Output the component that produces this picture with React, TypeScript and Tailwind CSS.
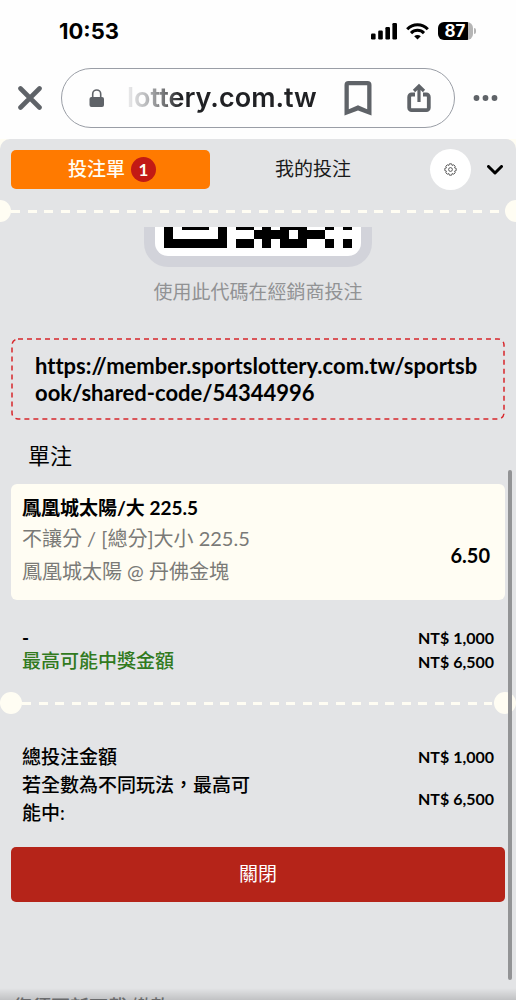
import type { ReactNode } from 'react';

const SLIP = {
  count: 1,
  url: 'https://member.sportslottery.com.tw/sportsbook/shared-code/54344996',
  stake: 'NT$ 1,000',
  payout: 'NT$ 6,500',
};

// bottom rows of the code: [x, y, width, height]
const QR_BLOCKS = [
  [0, 0, 9, 21], [54, 0, 9, 21], [0, 12, 63, 9], [18, 0, 27, 3],
  [72, 0, 18, 3], [72, 12, 18, 9], [90, 3, 36, 9], [99, 0, 9, 21],
  [117, 0, 27, 3], [117, 12, 27, 9], [135, 3, 27, 9],
  [162, 0, 9, 3], [162, 12, 9, 9], [180, 0, 9, 3], [180, 12, 9, 9],
];

function StatusBar() {
  return (
    <div className="flex h-[62px] items-center justify-between pl-[59px] pr-10 font-[Inter,sans-serif]">
      <span className="text-[22px] leading-7 font-bold text-black">10:53</span>
      <div className="flex items-center gap-[9px]">
        <svg width="26" height="17" viewBox="0 0 26 17" aria-hidden="true">
          <rect x="0" y="10.5" width="4.6" height="6" rx="1.2" />
          <rect x="7.2" y="7.5" width="4.6" height="9" rx="1.2" />
          <rect x="14.4" y="4" width="4.6" height="12.5" rx="1.2" />
          <rect x="21.4" y="0" width="4.6" height="16.5" rx="1.2" />
        </svg>
        <svg width="23" height="17" viewBox="0 0 23 17" fill="none" stroke="black" strokeWidth="3" aria-hidden="true">
          <path d="M1.2 6.2C7 .2 16 .2 21.8 6.2" />
          <path d="M5 10.1C8.6 6.4 14.4 6.4 18 10.1" />
          <path d="M11.5 16.5 8.2 13.2C10 11.5 13 11.5 14.8 13.2Z" fill="black" stroke="none" />
        </svg>
        <div className="flex items-center gap-px">
          <div className="flex h-[18px] w-[35px] items-center justify-center rounded-[6px] bg-[linear-gradient(90deg,#000_0_30px,#b5b5b5_30px)] pr-px text-[17px] leading-none font-bold text-white">
            87
          </div>
          <div className="h-[6px] w-[2px] rounded-r-full bg-[#b5b5b5]" />
        </div>
      </div>
    </div>
  );
}

function AddressBar() {
  return (
    <div className="flex h-[77px] items-start gap-[18px] px-[18px] pt-[6px] text-[#5f6368]">
      <button type="button" aria-label="關閉分頁" className="flex h-[60px] w-[25px] shrink-0 items-center">
        <svg width="24" height="24" viewBox="0 0 24 24" fill="none" stroke="currentColor" strokeWidth="4.6" strokeLinecap="round">
          <path d="M2.5 2.5 21.5 21.5M21.5 2.5 2.5 21.5" />
        </svg>
      </button>
      <div className="flex h-[60px] min-w-0 flex-1 items-center rounded-full border border-[#9a9ea6] pl-[27px] pr-[23px]">
        <svg width="16" height="19" viewBox="0 0 16 19" className="shrink-0" aria-hidden="true">
          <rect x="0.5" y="8" width="14.5" height="10" rx="2" fill="currentColor" />
          <path d="M3.7 9V5a4 4 0 0 1 8 0V9" fill="none" stroke="currentColor" strokeWidth="1.6" />
        </svg>
        <span className="ml-[22px] flex-1 overflow-hidden bg-[linear-gradient(90deg,#ededee_0,#b8b9bb_20px,#77787a_36px,#202124_54px)] bg-clip-text font-[Inter,sans-serif] text-[27px] leading-9 font-semibold whitespace-nowrap text-transparent">
          lottery.com.tw
        </span>
        <button type="button" aria-label="加入書籤" className="shrink-0">
          <svg width="28" height="35" viewBox="0 0 28 35" fill="currentColor" fillRule="evenodd">
            <path d="M.5 4A4 4 0 0 1 4.5 0h19A4 4 0 0 1 27.5 4v30.5L14 29.5.5 34.5zM4.8 4.3v24L14 24.2l9.2 4.1v-24z" />
          </svg>
        </button>
        <button type="button" aria-label="分享" className="ml-[35px] shrink-0">
          <svg width="24" height="30" viewBox="0 0 24 30" fill="none" stroke="currentColor" strokeWidth="3.8">
            <path d="M8 11.5H4.6A2.4 2.4 0 0 0 2.2 13.9v10.8a2.4 2.4 0 0 0 2.4 2.4h14.8a2.4 2.4 0 0 0 2.4-2.4V13.9a2.4 2.4 0 0 0-2.4-2.4H16" />
            <path d="M12 19V3.5M7 8 12 3l5 5" strokeWidth="3.2" />
          </svg>
        </button>
      </div>
      <button type="button" aria-label="更多" className="flex h-[60px] w-[25px] shrink-0 items-center">
        <svg width="25" height="6" viewBox="0 0 25 6" fill="currentColor">
          <circle cx="3.5" cy="3" r="2.9" />
          <circle cx="12.5" cy="3" r="2.9" />
          <circle cx="21.5" cy="3" r="2.9" />
        </svg>
      </button>
    </div>
  );
}

function Tabs() {
  return (
    <div className="flex items-center pl-[11px] pr-[13px] pt-[10px]">
      <button type="button" className="flex h-[39px] w-[199px] items-center justify-center gap-[6px] rounded-[5px] bg-[#ff7a00] pl-[3px] text-[19px] font-medium text-[#fffdf3]">
        投注單
        <span className="flex size-[25px] items-center justify-center rounded-full bg-[#c21a14] text-[17px] font-bold">{SLIP.count}</span>
      </button>
      <button type="button" className="flex-1 pr-[14px] text-center text-[19px] text-[#1a1a1a]">
        我的投注
      </button>
      <button type="button" aria-label="設定" className="flex size-[41px] items-center justify-center rounded-full bg-white">
        <svg width="13" height="13" viewBox="0 0 24 24" fill="none" stroke="#444" strokeWidth="1.6" strokeLinejoin="round">
          <path d="M10 1.5h4l1 3 3-1.2 2.7 2.7-1.2 3 3 1v4l-3 1 1.2 3-2.7 2.7-3-1.2-1 3h-4l-1-3-3 1.2L3.3 18l1.2-3-3-1v-4l3-1-1.2-3L6 3.3l3 1.2z" />
          <circle cx="12" cy="12" r="3.5" />
        </svg>
      </button>
      <button type="button" aria-label="收合" className="ml-[16px]">
        <svg width="16" height="10" viewBox="0 0 16 10" fill="none" stroke="black" strokeWidth="3" strokeLinecap="round" strokeLinejoin="round">
          <path d="M1.5 1.5 8 8l6.5-6.5" />
        </svg>
      </button>
    </div>
  );
}

// perforated edge between two parts of the ticket
function TearLine() {
  return (
    <div className="flex h-[22px] items-center">
      <span className="size-[22px] shrink-0 rounded-full bg-[#fffdf3]" />
      <span className="mr-[2px] h-[3px] flex-1 bg-[repeating-linear-gradient(90deg,#fffdf3_0_9px,transparent_9px_17px,#fffdf3_17px_26px,transparent_26px_33px)]" />
      <span className="size-[22px] shrink-0 rounded-full bg-[#fffdf3]" />
    </div>
  );
}

function QrCode() {
  return (
    <div className="mx-auto flex h-10 w-[228px] items-end overflow-hidden">
      <div className="h-[228px] w-full shrink-0 rounded-[24px] bg-[#d2d3da] p-[11px]">
        <div className="flex h-full items-end rounded-[13px] bg-white px-[9px] pb-2">
          <svg width="189" height="21" viewBox="0 0 189 21" shapeRendering="crispEdges" aria-label="QR code">
            {QR_BLOCKS.map(([x, y, width, height]) => (
              <rect key={`${x}-${y}-${width}`} x={x} y={y} width={width} height={height} />
            ))}
          </svg>
        </div>
      </div>
    </div>
  );
}

function Amount({ children }: { children: ReactNode }) {
  return <span className="shrink-0 text-[16px] font-bold">{children}</span>;
}

export default function App() {
  return (
    <div className="flex h-screen flex-col overflow-hidden bg-[#fefefe] font-[Lato,'Noto_Sans_CJK_TC',sans-serif] text-black">
      <StatusBar />
      <AddressBar />

      <div className="flex min-h-0 flex-1 flex-col bg-[#fffdf3]">
        <main className="relative flex min-h-0 flex-1 flex-col overflow-hidden rounded-t-[10px] bg-[#e3e4e6]">
          <Tabs />
          <div className="-mx-[11px] mt-[10px]">
            <TearLine />
          </div>

          {/* Scrolled ticket body */}
          <div className="mt-[5px] min-h-0 flex-1 overflow-hidden px-[11px]">
            <QrCode />
            <p className="mt-[11px] text-center text-[19px] leading-7 text-[#919294]">使用此代碼在經銷商投注</p>

            <div className="relative mx-px mt-8 px-[23px] pt-[14px] pb-[12px]">
              <svg width="100%" height="100%" className="absolute inset-0 overflow-visible" aria-hidden="true">
                <rect y="1" width="100%" height="100%" rx="6" fill="none" stroke="#d8262b" strokeWidth="1.5" strokeDasharray="5 4" />
              </svg>
              <a href={SLIP.url} className="relative block text-[22px] leading-[27px] font-bold break-all [font-variant-ligatures:none]">
                {SLIP.url}
              </a>
            </div>

            <h2 className="mt-[22px] pl-[17px] text-[22px] leading-8">單注</h2>

            {/* Selection */}
            <section className="mt-[12px] flex items-center justify-between rounded-[6px] bg-[#fffdf3] pb-[14px] pl-[11px] pr-[15px] pt-[8px]">
              <div>
                <h3 className="text-[19px] leading-8 font-bold">鳳凰城太陽/大 225.5</h3>
                <p className="text-[20px] leading-7 text-[#7a7a77]">不讓分 / [總分]大小 225.5</p>
                <p className="mt-1 text-[20px] leading-[30px] text-[#7a7a77]">鳳凰城太陽 @ 丹佛金塊</p>
              </div>
              <span className="pt-8 text-[20px] font-bold">6.50</span>
            </section>

            <div className="mt-[26px] px-[11px] text-[19px] leading-[23px] font-medium">
              <div className="flex justify-between">
                <span className="font-bold">-</span>
                <Amount>{SLIP.stake}</Amount>
              </div>
              <div className="flex justify-between text-[#317a1e]">
                <span>最高可能中獎金額</span>
                <span className="text-black">
                  <Amount>{SLIP.payout}</Amount>
                </span>
              </div>
            </div>

            <div className="-mx-[11px] mt-[19px]">
              <TearLine />
            </div>

            {/* Totals */}
            <div className="mt-[29px] px-[11px] text-[19px] leading-7 font-medium">
              <div className="flex items-center justify-between">
                <span>總投注金額</span>
                <Amount>{SLIP.stake}</Amount>
              </div>
              <div className="flex items-center justify-between">
                <span className="w-1/2">若全數為不同玩法，最高可能中:</span>
                <Amount>{SLIP.payout}</Amount>
              </div>
            </div>

            <button type="button" className="mt-[20px] h-[55px] w-full rounded-[5px] bg-[#b52419] text-[19px] text-white">
              關閉
            </button>

            <p className="mt-[91px] pl-[2px] text-[19px] leading-7 font-medium whitespace-nowrap text-[#7b7c7e]">您須更新下載 繳款</p>
          </div>

          {/* Scroll thumb and the shade above the toolbar */}
          <div className="absolute right-1 top-[331px] bottom-5 w-[4px] rounded-full bg-[#929395]" />
          <div className="absolute inset-x-0 bottom-0 h-3 bg-linear-to-b from-transparent to-black/15" />
        </main>
      </div>
    </div>
  );
}
